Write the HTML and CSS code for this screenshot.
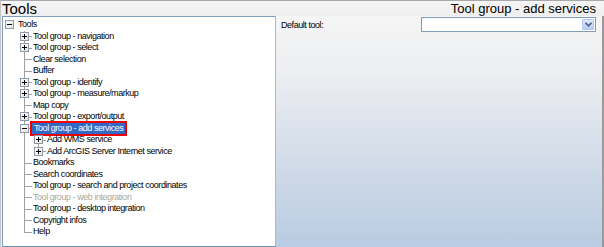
FILE: index.html
```html
<!DOCTYPE html>
<html>
<head>
<meta charset="utf-8">
<link rel="stylesheet" href="styles.css">
</head>
<body>
<div class="window">
  <div class="header">
    <span class="title-left">Tools</span>
    <span class="title-right">Tool group - add services</span>
  </div>
  <div class="main">
    <div class="tree">
      <ul class="root">
        <li>
          <div class="row"><span class="exp"><span class="box minus"></span></span><span class="label">Tools</span></div>
          <ul class="children">
            <li><div class="row"><span class="exp node"><span class="box plus"></span></span><span class="label">Tool group - navigation</span></div></li>
            <li><div class="row"><span class="exp node"><span class="box plus"></span></span><span class="label">Tool group - select</span></div></li>
            <li><div class="row"><span class="exp leaf"></span><span class="label">Clear selection</span></div></li>
            <li><div class="row"><span class="exp leaf"></span><span class="label">Buffer</span></div></li>
            <li><div class="row"><span class="exp node"><span class="box plus"></span></span><span class="label">Tool group - identify</span></div></li>
            <li><div class="row"><span class="exp node"><span class="box plus"></span></span><span class="label">Tool group - measure/markup</span></div></li>
            <li><div class="row"><span class="exp leaf"></span><span class="label">Map copy</span></div></li>
            <li><div class="row"><span class="exp node"><span class="box plus"></span></span><span class="label">Tool group - export/output</span></div></li>
            <li>
              <div class="row"><span class="exp node"><span class="box minus"></span></span><span class="label selected">Tool group - add services</span></div>
              <ul class="children sub">
                <li><div class="row"><span class="exp node"><span class="box plus"></span></span><span class="label">Add WMS service</span></div></li>
                <li><div class="row"><span class="exp node"><span class="box plus"></span></span><span class="label">Add ArcGIS Server Internet service</span></div></li>
              </ul>
            </li>
            <li><div class="row"><span class="exp leaf"></span><span class="label">Bookmarks</span></div></li>
            <li><div class="row"><span class="exp leaf"></span><span class="label">Search coordinates</span></div></li>
            <li><div class="row"><span class="exp leaf"></span><span class="label">Tool group - search and project coordinates</span></div></li>
            <li><div class="row"><span class="exp leaf"></span><span class="label disabled">Tool group - web integration</span></div></li>
            <li><div class="row"><span class="exp leaf"></span><span class="label">Tool group - desktop integration</span></div></li>
            <li><div class="row"><span class="exp leaf"></span><span class="label">Copyright infos</span></div></li>
            <li><div class="row"><span class="exp leaf"></span><span class="label">Help</span></div></li>
          </ul>
        </li>
      </ul>
    </div>
    <div class="props">
      <span class="prop-label">Default tool:</span>
      <div class="combo">
        <span class="combo-value"></span>
        <span class="combo-btn"><svg width="7" height="5" viewBox="0 0 7 5"><path d="M0.5 0.8 L3.5 3.8 L6.5 0.8" fill="none" stroke="#4d6185" stroke-width="1.6"/></svg></span>
      </div>
    </div>
  </div>
</div>
</body>
</html>
```
FILE: styles.css
```css
* { box-sizing: border-box; }
html, body { margin: 0; padding: 0; }
body {
  width: 604px;
  height: 247px;
  overflow: hidden;
  background: #f0f0f0;
  font-family: "Liberation Sans", Arial, sans-serif;
}
.window {
  height: 247px;
  display: flex;
  flex-direction: column;
  border-top: 1px solid #a8a8a8;
  border-left: 1px solid #c8c8c8;
  background: #f1f1f1;
}
.header {
  height: 15px;
  display: flex;
  justify-content: space-between;
  align-items: center;
  padding: 0 8px 0 1px;
  background: linear-gradient(#f6f6f6, #eeeeee);
  color: #000;
}
.title-left { font-size: 15px; line-height: 15px; }
.title-right { font-size: 13px; line-height: 15px; }
.main {
  flex: 1;
  display: flex;
  min-height: 0;
}
.tree {
  width: 274px;
  margin-left: 1px;
  background: #fff;
  border: 1px solid #7f9db9;
  border-right-color: #a5b9d0;
  border-bottom-color: #6c8fb0;
  padding-top: 2px;
  font-size: 9px;
  letter-spacing: -0.45px;
  color: #000;
  overflow: hidden;
}
.tree ul { list-style: none; margin: 0; padding: 0; }
.tree ul.children { padding-left: 15px; }
.tree ul.children.sub { padding-left: 14px; }
.tree li { position: relative; }
.children > li::before {
  content: "";
  position: absolute;
  left: 6px;
  top: 0;
  height: 100%;
  border-left: 1px solid #a0a0a0;
}
.children > li:last-child::before { height: 6px; }
.row {
  display: flex;
  align-items: center;
  height: 11.5px;
  white-space: nowrap;
}
.exp {
  position: relative;
  width: 12px;
  height: 100%;
  flex: none;
  display: flex;
  align-items: center;
  justify-content: center;
}
.exp.leaf::after,
.exp.node::after {
  content: "";
  position: absolute;
  left: 6px;
  right: -2px;
  top: 50%;
  border-top: 1px solid #a0a0a0;
}
.box {
  position: relative;
  z-index: 1;
  width: 9px;
  height: 9px;
  border: 1px solid #8c9aab;
  background: linear-gradient(135deg, #ffffff, #e4e4dc);
}
.box::before {
  content: "";
  position: absolute;
  left: 1px;
  top: 3px;
  width: 5px;
  height: 1px;
  background: #000;
}
.box.plus::after {
  content: "";
  position: absolute;
  left: 3px;
  top: 1px;
  width: 1px;
  height: 5px;
  background: #000;
}
.label {
  position: relative;
  z-index: 1;
  margin-left: 2px;
  padding: 0 1px;
  line-height: 11px;
}
.label.selected {
  background: #316ac5;
  color: #fff;
  outline: 2px solid #ee0000;
  outline-offset: 0;
  padding: 0 2px;
}
.label.disabled { color: #aca899; }
.props {
  flex: 1;
  display: flex;
  justify-content: space-between;
  align-items: flex-start;
  padding: 1px 6px 0 5px;
  background: linear-gradient(#f5f5f5 0%, #eceef1 25%, #d7dfea 55%, #b9cbe2 100%);
  border-right: 2px solid #9a9a9a;
}
.prop-label {
  font-size: 9px;
  letter-spacing: -0.45px;
  margin-top: 3px;
  color: #000;
}
.combo {
  width: 175px;
  height: 15px;
  display: flex;
  background: #fff;
  border: 1px solid #7f9db9;
  padding: 1px;
}
.combo-value { flex: 1; }
.combo-btn {
  width: 12px;
  height: 11px;
  display: flex;
  align-items: center;
  justify-content: center;
  background: linear-gradient(#dde8fc, #b5cbf5);
  border: 1px solid #b7c9ef;
  border-radius: 1px;
}
```
